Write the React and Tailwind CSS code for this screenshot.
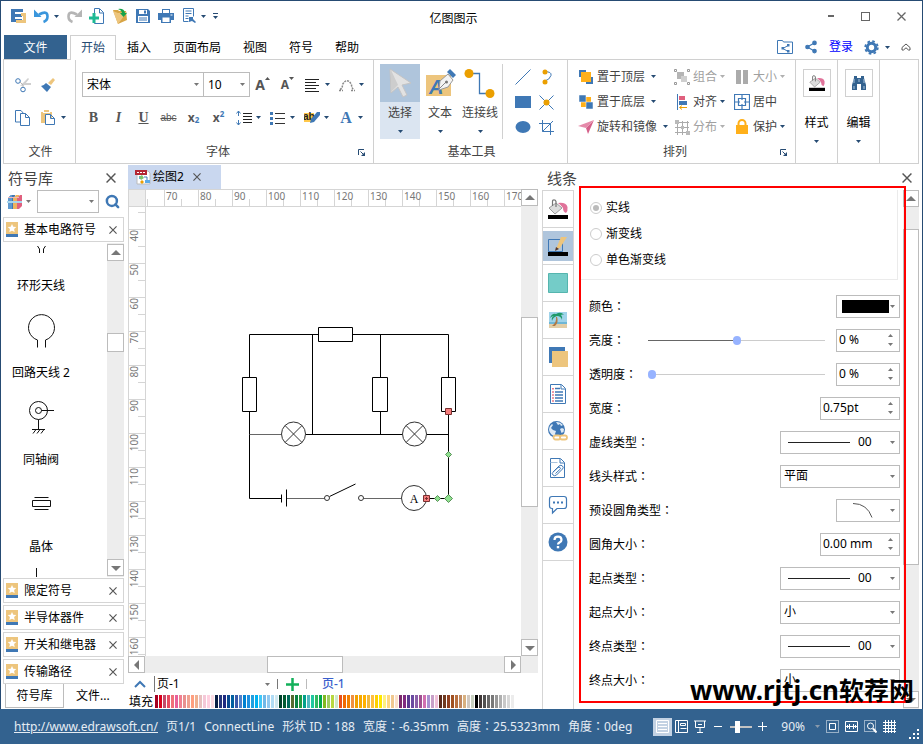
import React from "react";
import { Settings, Share2, Search } from "lucide-react";

const CANVAS_FONT = '"Noto Sans", "Noto Sans CJK SC", sans-serif';

const Svg = ({ w = 16, h = 16, children, className = "" }) => (
  <svg width={w} height={h} viewBox={`0 0 ${w} ${h}`} fill="none" className={`shrink-0 ${className}`} aria-hidden="true">
    {children}
  </svg>
);

const Caret = ({ className = "text-[#264b73]" }) => (
  <Svg w={5} h={3} className={className}>
    <path d="M0 0h5L2.500 3z" fill="currentColor" />
  </Svg>
);

const Cross = ({ size = 9, className = "text-[#555]" }) => (
  <svg width={size} height={size} viewBox="0 0 9 9" className={className} aria-hidden="true">
    <path d="M.5.5l8 8M8.500.5l-8 8" stroke="currentColor" strokeWidth="1.300" />
  </svg>
);

const Arrow = ({ dir }) => {
  const d = {
    up: "M0 7l5-5 5 5z",
    down: "M0 3l5 5 5-5z",
    left: "M7 0L2 5l5 5z",
    right: "M3 0l5 5-5 5z",
  };
  return (
    <Svg w={10} h={10}>
      <path d={d[dir]} fill="#777" />
    </Svg>
  );
};

const ScrollButton = ({ dir }) => (
  <button aria-label={`scroll ${dir}`} className="flex h-[17px] w-[17px] shrink-0 items-center justify-center border border-[#bcbcbc] bg-white">
    <Arrow dir={dir} />
  </button>
);

// the traditional form centres the full-width colon
const Colon = () => (
  <span lang="zh-TW" className="font-['Noto_Sans_CJK_TC']">
    ：
  </span>
);

/* ---------- shared drawings ---------- */

const Bucket = ({ size = 16 }) => (
  <svg width={size} height={size} viewBox="0 0 20 20" aria-hidden="true">
    <path d="M1 9l7-5 6 5-7 6z" fill="#dcdcdc" stroke="#9a9a9a" />
    <path d="M4.500 7V2.500Q4.500.8 6 .8T8 2.500V8" fill="none" stroke="#777" strokeWidth="1.200" />
    <path d="M10 4q8-1 9.500 4 .5 4-1.500 6-3-1-3-5-2-3-5-5z" fill="#e0739a" />
    <path d="M0 16h20v4H0z" fill="#000" />
  </svg>
);

const TwoSquares = ({ top = true }) => (
  <Svg>
    {top ? (
      <>
        <path d="M1 1h7v7H1zM8 8h7v7H8z" fill="#3f78b5" />
        <path d="M3 3h10v10H3z" fill="#ffb01a" />
      </>
    ) : (
      <>
        <path d="M3 3h10v10H3z" fill="#ffb01a" />
        <path d="M1 1h7v7H1zM8 8h7v7H8z" fill="#3f78b5" stroke="#fff" strokeWidth=".5" />
      </>
    )}
  </Svg>
);

const StarBook = () => (
  <Svg w={12} h={15}>
    <path d="M0 0h12v12H0z" fill="#edc57d" />
    <path d="M0 12h12v3H0z" fill="#3f78b5" />
    <path d="M6 2l1.300 2.700 3 .4-2.200 2 .6 3L6 8.700 3.300 10.100l.6-3-2.200-2 3-.4z" fill="#fff" />
  </Svg>
);

/* ---------- title bar ---------- */

const quick = [
  {
    n: "undo",
    caret: true,
    i: (
      <Svg>
        <path d="M5 6.500Q13.500 2 13.500 8.500 13.500 12.500 9.500 14" stroke="#3a96dc" strokeWidth="2.600" />
        <path d="M0 1.500V9h7.500z" fill="#3a96dc" />
      </Svg>
    ),
  },
  {
    n: "redo",
    i: (
      <Svg>
        <path d="M11 6.500Q2.500 2 2.500 8.500 2.500 12.500 6.500 14" stroke="#b5b5b5" strokeWidth="2.600" />
        <path d="M16 1.500V9H8.500z" fill="#b5b5b5" />
      </Svg>
    ),
  },
  {
    n: "new",
    i: (
      <Svg>
        <path d="M5.500 5V.500h5l4 4v11h-9V14M10.500 1v4h4" stroke="#3f78b5" />
        <path d="M3.500 5h3v3.500H10v3H6.500V15h-3v-3.500H0v-3h3.500z" fill="#1fb995" />
      </Svg>
    ),
  },
  {
    n: "open",
    i: (
      <Svg>
        <path d="M1 2h5l1 1h7l1 9-9 4z" fill="#d8a545" />
        <path d="M1 3l5 2 9-1-9 12z" fill="#edc57d" />
        <path d="M6 1q6-1 7 4h2l-3.500 4L8 5h2q-.5-3-4-4z" fill="#16a34a" />
      </Svg>
    ),
  },
  {
    n: "save",
    i: (
      <Svg>
        <path d="M1 1h12l2 2v12H1z" fill="#3f78b5" />
        <path d="M4 2h8v4H4zM3 8h10v6H3z" fill="#fff" />
        <path d="M9 2.500h2v3H9zM4 9.500h8v1H4zM4 11.500h8v1H4z" fill="#3f78b5" />
      </Svg>
    ),
  },
  {
    n: "print",
    i: (
      <Svg>
        <path d="M4 1h8v4H4zM0 5h16v7h-3v3H3v-3H0z" fill="#3f78b5" />
        <path d="M5 2h6v3H5zM4.500 9.500h7V14h-7z" fill="#fff" />
        <path d="M12.500 6.500h2v1h-2z" fill="#fff" />
      </Svg>
    ),
  },
  {
    n: "preview",
    caret: true,
    i: (
      <Svg>
        <path d="M2.500.500h10v8M2.500.500v13h5M4.500 3h6M4.500 5.500h6M4.500 8h3M4.500 10.500h3" stroke="#3f78b5" />
        <path d="M8 9h4v2l3 3-1 1-3-2-3 1z" fill="#3f78b5" />
      </Svg>
    ),
  },
];

const TitleBar = () => (
  <header className="grid h-[34px] grid-cols-[1fr_auto_1fr] items-center pr-4">
    <div className="flex items-center gap-[7px] pb-1 pl-2.5">
      <Svg>
        <path d="M0 1h12v3H4v2h7v3H4v2h7v3H0z" fill="#3f78b5" />
        <path d="M10 5h5v10H5v-3h7V8h-2z" fill="#edc57d" />
      </Svg>
      {quick.map((q) => (
        <button key={q.n} aria-label={q.n} className="flex items-center gap-1">
          {q.i}
          {q.caret && <Caret />}
        </button>
      ))}
      <button aria-label="customize" className="flex flex-col items-center gap-0.5 text-[#264b73]">
        <span className="h-px w-[5px] bg-[#264b73]" />
        <Caret />
      </button>
    </div>
    <h1 className="pt-0.5">亿图图示</h1>
    <div className="flex items-center justify-end gap-[27px] pb-1">
      <button aria-label="minimize" className="h-0.5 w-1.5 bg-[#666]" />
      <button aria-label="maximize" className="h-[9px] w-[9px] border border-[#666]" />
      <button aria-label="close">
        <Cross className="text-[#666]" />
      </button>
    </div>
  </header>
);

const menus = ["插入", "页面布局", "视图", "符号", "帮助"];

const MenuBar = () => (
  <nav className="flex h-6 items-stretch pl-[3px] pr-[11px]">
    <button className="w-[63px] bg-[#33628f] pt-0.5 text-white">文件</button>
    <button className="relative z-10 -mb-px ml-[3px] w-[46px] border border-b-0 border-[#d0d0d0] bg-white text-[#264b73]">开始</button>
    {menus.map((m) => (
      <button key={m} className="px-[11px] pt-0.5">
        {m}
      </button>
    ))}
    <div className="ml-auto flex items-center gap-[11px]">
      <button aria-label="shared folder">
        <Svg>
          <path d="M.5 1.500h5l1 1.500h9v11.500H.5z" stroke="#3f78b5" />
          <path d="M11 6.500L6 9.500l5 3" stroke="#3f78b5" />
          <path d="M10 5h2.500v2.500H10zM4.500 8H7v2.500H4.500zM10 11h2.500v2.500H10z" fill="#3f78b5" />
        </Svg>
      </button>
      <button aria-label="share">
        <Share2 size={14} fill="#3f78b5" className="text-[#3f78b5]" />
      </button>
      <a href="#login" className="text-[#0000ff]">
        登录
      </a>
      <button aria-label="settings" className="flex items-center gap-1.5">
        <Svg w={15} h={15}>
          <circle cx="7.500" cy="7.500" r="4.200" stroke="#3f78b5" strokeWidth="3" />
          <circle cx="7.500" cy="7.500" r="6.300" stroke="#3f78b5" strokeWidth="1.800" strokeDasharray="2.600 2.350" />
        </Svg>
        <Caret />
      </button>
      <button aria-label="collapse">
        <Svg w={10} h={10}>
          <path d="M1 5.500L5 2l4 3.500V8H7.500L5 5.800 2.500 8H1z" stroke="#555" />
        </Svg>
      </button>
    </div>
  </nav>
);

/* ---------- ribbon ---------- */

const Group = ({ label, launcher, className = "", children }) => (
  <section className={`flex shrink-0 flex-col border-r border-[#d0d0d0] ${className}`}>
    <div className="h-[83px]">{children}</div>
    <div className="flex h-[18px] items-center pl-0.5 text-[#444]">
      <span className="flex-1 text-center">{label}</span>
      {launcher && (
        <button aria-label={`${label} options`} className="mr-2">
          <Svg w={7} h={7}>
            <path d="M.5 6V.5H6" stroke="#264b73" />
            <path d="M2.500 2.500l3 3" stroke="#264b73" />
            <path d="M7 3v4H3z" fill="#264b73" />
          </Svg>
        </button>
      )}
    </div>
  </section>
);

const FileGroup = () => (
  <Group label="文件" className="w-[72px]">
    <div className="grid grid-cols-[26px_34px] gap-y-2 pl-[11px] pt-3">
      <button aria-label="cut" className="flex h-[25px] items-center">
        <Svg>
          <path d="M5 9L13 1l1 1-5 6.500zM7 6h9v2H9z" fill="#cfcfcf" />
          <circle cx="3" cy="4" r="2.300" stroke="#3f78b5" />
          <circle cx="8" cy="12.500" r="2.300" stroke="#3f78b5" />
          <path d="M5 5l3 3v2" stroke="#b5b5b5" />
        </Svg>
      </button>
      <button aria-label="format painter" className="flex h-[25px] items-center">
        <Svg>
          <path d="M12 1l2 2-4 5-3-2z" fill="#edc57d" />
          <path d="M5 6l5 4-4 5-6-6q3-.5 5-3z" fill="#3f78b5" />
        </Svg>
      </button>
      <button aria-label="copy" className="flex h-[25px] items-center">
        <Svg>
          <path d="M5 12H.500V.500H6L9 4" stroke="#3f78b5" />
          <path d="M5.500 3.500h5l4 4v8h-9zM10.500 3.500v4h4" fill="#fff" stroke="#3f78b5" />
        </Svg>
      </button>
      <button aria-label="paste" className="flex h-[25px] items-center gap-1">
        <Svg>
          <path d="M0 2h2v1h7V2h2v11H0z" fill="#edc57d" />
          <path d="M3 0h5v2H3z" fill="#edc57d" />
          <path d="M4.500 4.500h5l4 4v6h-9zM9.500 4.500v4h4" fill="#fff" stroke="#3f78b5" />
        </Svg>
        <Caret />
      </button>
    </div>
  </Group>
);

const FontButton = ({ label, children }) => (
  <button aria-label={label} className="flex h-[25px] w-[25px] items-center justify-center text-[#555]">
    {children}
  </button>
);

const FontDrop = ({ label, children }) => (
  <button aria-label={label} className="flex h-[25px] w-[34px] items-center gap-1 pl-[5px]">
    {children}
    <Caret />
  </button>
);

const Combo = ({ label, value, className }) => (
  <div className={`relative ${className}`}>
    <select aria-label={label} className="h-[25px] w-full appearance-none border border-[#bcbcbc] bg-white pl-1 text-black">
      <option>{value}</option>
    </select>
    <Caret className="pointer-events-none absolute right-[5px] top-[11px] text-[#777]" />
  </div>
);

const FontGroup = () => (
  <Group label="字体" launcher className="w-[298px]">
    <div className="flex pl-1.5 pt-3">
      <Combo label="font" value="宋体" className="w-[122px]" />
      <Combo label="font size" value="10" className="-ml-px w-[47px]" />
      <FontButton label="grow font">
        <span className="text-sm font-bold">A</span>
        <Svg w={5} h={16}>
          <path d="M0 3h5L2.500 0z" fill="#555" />
        </Svg>
      </FontButton>
      <FontButton label="shrink font">
        <span className="text-xs font-bold">A</span>
        <Svg w={5} h={16}>
          <path d="M0 0h5L2.500 3z" fill="#555" />
        </Svg>
      </FontButton>
      <FontDrop label="align text">
        <Svg>
          <path d="M0 2.500h14M0 5.500h11M0 8.500h14M0 11.500h11M0 14.500h14" stroke="#222" />
        </Svg>
      </FontDrop>
      <FontDrop label="text on curve">
        <Svg>
          <path d="M1 12.500q2.500-1 2.500-5Q8 0 12.500 7.500q0 4 2.500 5M0 13.500h4M12 13.500h4" stroke="#888" strokeWidth="1.500" strokeDasharray="2 1" />
        </Svg>
      </FontDrop>
    </div>
    <div className="flex pl-[5px] pt-2">
      <FontButton label="bold">
        <b className="font-['Liberation_Serif'] text-sm">B</b>
      </FontButton>
      <FontButton label="italic">
        <b className="font-['Liberation_Serif'] text-sm italic">I</b>
      </FontButton>
      <FontButton label="underline">
        <b className="font-['Liberation_Serif'] text-sm underline">U</b>
      </FontButton>
      <FontButton label="strikethrough">
        <s className="font-['Liberation_Sans'] text-[10px]">abc</s>
      </FontButton>
      <FontButton label="subscript">
        <b className="text-xs">x</b>
        <sub className="text-[8px] font-bold text-[#3f78b5]">2</sub>
      </FontButton>
      <FontButton label="superscript">
        <b className="text-xs">x</b>
        <sup className="text-[8px] font-bold text-[#3f78b5]">2</sup>
      </FontButton>
      <FontDrop label="line spacing">
        <Svg>
          <path d="M2.500 1v5M2.500 10v5M.5 3.500l2-2.500 2 2.500M.5 12.500l2 2.500 2-2.500" stroke="#3f78b5" />
          <path d="M7 3.500h9M7 6.500h9M7 9.500h9M7 12.500h9" stroke="#222" />
        </Svg>
      </FontDrop>
      <FontDrop label="bullets">
        <Svg>
          <path d="M0 2h3v3H0zM0 7h3v3H0zM0 12h3v3H0z" fill="#3f78b5" />
          <path d="M5 3.500h10M5 8.500h10M5 13.500h10" stroke="#333" />
        </Svg>
      </FontDrop>
      <FontDrop label="highlight">
        <Svg>
          <path d="M0 3h10v9H0z" fill="#ffc84a" />
          <text x="-1" y="10" fontSize="10" fontWeight="700" fontFamily="Liberation Sans" fill="#222">ab</text>
          <path d="M13 2h3v3l-6 7-4 1 1-4z" fill="#3f78b5" />
        </Svg>
      </FontDrop>
      <FontDrop label="font color">
        <b className="w-4 text-center font-['Liberation_Serif'] text-base text-[#3f78b5]">A</b>
      </FontDrop>
    </div>
  </Group>
);

const bigTools = [
  {
    t: "选择",
    on: true,
    i: (
      <Svg w={34} h={34}>
        <path d="M7 3l21 14-9 2 5 10-4 2-5-10-7 6z" fill="#e2e2e2" stroke="#c4c4c4" />
        <path d="M8 4v22l7-7z" fill="#cdcdcd" />
      </Svg>
    ),
  },
  {
    t: "文本",
    i: (
      <Svg w={34} h={34}>
        <path d="M3 9h25v21H3z" fill="#edc57d" />
        <text x="6" y="28" fontSize="20" fontWeight="700" fontStyle="italic" fontFamily="Liberation Sans" fill="#3f78b5">A</text>
        <path d="M25 8l5 6-5 7-9 3 1-9z" fill="#f3f3f3" stroke="#999" />
        <path d="M16 23l7-7" stroke="#888" />
        <circle cx="23.500" cy="16" r="1.500" fill="#777" />
        <path d="M24 6l3-3 6 6-3 3z" fill="#3f78b5" />
      </Svg>
    ),
  },
  {
    t: "连接线",
    i: (
      <Svg w={34} h={34}>
        <path d="M6 7.500h10.500v20H26" stroke="#3f78b5" strokeWidth="1.300" />
        <circle cx="6" cy="7.500" r="4.500" fill="#eb9f00" />
        <circle cx="27" cy="27.500" r="4.500" fill="#eb9f00" />
      </Svg>
    ),
  },
];

const shapes = [
  { n: "line", i: <path d="M.5 15.500l15-15" stroke="#3f78b5" /> },
  {
    n: "arc",
    i: (
      <>
        <path d="M5 2.500q8 0 7 4t-7 6" stroke="#3f78b5" />
        <circle cx="6" cy="3" r="2.500" fill="#eb9f00" />
        <circle cx="6" cy="13" r="2.500" fill="#eb9f00" />
      </>
    ),
  },
  { n: "rectangle", i: <path d="M0 2h16v12H0z" fill="#3f78b5" /> },
  {
    n: "connection point",
    i: (
      <>
        <path d="M.5 1.500l14 14M14.500 1.500l-14 14" stroke="#3f78b5" />
        <circle cx="7.500" cy="8.500" r="3" fill="#eb9f00" />
      </>
    ),
  },
  { n: "ellipse", i: <ellipse cx="8" cy="8" rx="7.500" ry="6" fill="#3f78b5" /> },
  { n: "crop", i: <path d="M3.500 1v11.500H15M0 4.500h11.500V16M3.500 12.500L14 2" stroke="#3f78b5" /> },
];

const ToolsGroup = () => (
  <Group label="基本工具" className="w-[194px]">
    <div className="flex pl-1.5 pt-1">
      {bigTools.map((b) => (
        <button key={b.t} className={`flex h-[75px] w-10 flex-col items-center text-[#444] ${b.on ? "bg-[#dbe5f1]" : ""}`}>
          <span className={`flex h-[38px] w-full items-center justify-center ${b.on ? "bg-[#afc5dc]" : ""}`}>{b.i}</span>
          <span className="mt-0.5 leading-[18px]">{b.t}</span>
          <Caret className="mt-2 text-[#264b73]" />
        </button>
      ))}
      <div className="ml-0.5 grid grid-cols-2 gap-x-2 border-l border-[#d0d0d0] pl-3">
        {shapes.map((s) => (
          <button key={s.n} aria-label={s.n} className="flex h-[25px] items-center">
            <Svg>{s.i}</Svg>
          </button>
        ))}
      </div>
    </div>
  </Group>
);

const arrange = [
  { t: "置于顶层", wide: true, i: <TwoSquares /> },
  {
    t: "组合",
    off: true,
    i: (
      <Svg>
        <path d="M3 3h7v7H3z" fill="#b5b5b5" />
        <path d="M7 7h6v6H7z" fill="#cfcfcf" />
        <path d="M.5.500h2v2h-2zM13.500.500h2v2h-2zM.5 13.500h2v2h-2zM13.500 13.500h2v2h-2z" fill="#fff" stroke="#999" />
      </Svg>
    ),
  },
  {
    t: "大小",
    off: true,
    i: (
      <Svg>
        <path d="M2 1h5v14H2zM9 1h5v14H9z" fill="#ababab" />
      </Svg>
    ),
  },
  { t: "置于底层", wide: true, i: <TwoSquares top={false} /> },
  {
    t: "对齐",
    i: (
      <Svg>
        <path d="M3.500 0v16" stroke="#3f78b5" />
        <path d="M5 2h6v4H5z" fill="#e0607e" />
        <path d="M5 7h8v4H5z" fill="#3f78b5" />
        <path d="M13 13.500H6M8 11.500l-2.500 2 2.500 2" stroke="#eb9f00" />
      </Svg>
    ),
  },
  {
    t: "居中",
    plain: true,
    i: (
      <Svg>
        <path d="M.5.500h15v15H.5zM4.500 4.500h7v7h-7zM8 1v6M8 9v6M1 8h6M9 8h6" stroke="#3f78b5" strokeWidth="1.200" />
        <path d="M6 6h4v4H6z" fill="#fff" />
      </Svg>
    ),
  },
  {
    t: "旋转和镜像",
    wide: true,
    i: (
      <Svg>
        <path d="M16 1L10 15 8 9z" fill="#d5608a" />
        <path d="M16 1L0 7l8 2z" fill="#e58aaa" />
      </Svg>
    ),
  },
  {
    t: "分布",
    off: true,
    i: (
      <Svg>
        <path d="M3.500 2v14M8.500 2v14M13.500 2v14M1 3.500h14M1 8.500h14M1 13.500h14" stroke="#ababab" />
        <path d="M1 1h4v4H1zM7 7h3v3H7zM12 12h4v4h-4z" fill="#b9b9b9" />
      </Svg>
    ),
  },
  {
    t: "保护",
    i: (
      <Svg>
        <path d="M2 6h12v9H2z" fill="#ffb01a" />
        <path d="M4.500 7V4.500a3.500 3.500 0 017 0V7" stroke="#ffb01a" strokeWidth="2" />
      </Svg>
    ),
  },
];

const ArrangeGroup = () => (
  <Group label="排列" launcher className="w-[228px]">
    <div className="grid grid-cols-[96px_60px_1fr] pl-[10px] pt-1">
      {arrange.map((a) => (
        <button key={a.t} className={`flex h-[25px] items-center gap-[3px] whitespace-nowrap ${a.off ? "text-[#a0a0a0]" : "text-[#444]"}`}>
          {a.i}
          {a.t}
          {!a.plain && (
            <Caret className={`${a.wide ? "ml-[3px]" : ""} ${a.off ? "text-[#b0b0b0]" : "text-[#264b73]"}`} />
          )}
        </button>
      ))}
    </div>
  </Group>
);

const SideTool = ({ label, children }) => (
  <section className="flex w-[42px] shrink-0 flex-col items-center border-r border-[#d0d0d0] pt-[9px]">
    <button className="flex flex-col items-center">
      <span className="flex h-7 w-7 items-center justify-center border border-[#d0d0d0]">{children}</span>
      <span className="mt-[17px] leading-[18px]">{label}</span>
      <Caret className="mt-2 text-[#264b73]" />
    </button>
  </section>
);

const Ribbon = () => (
  <div className="ml-0.5 mr-[3px] flex h-[105px] overflow-hidden border border-[#d0d0d0] bg-white">
    <FileGroup />
    <FontGroup />
    <ToolsGroup />
    <ArrangeGroup />
    <SideTool label="样式">
      <Bucket />
    </SideTool>
    <SideTool label="编辑">
      <Svg>
        <path d="M3 1h3v2h4V1h3v2l2 7v5h-5V9H6v6H1v-5l2-7z" fill="#33628f" />
        <path d="M3 4v4M13 4v4M3 11v3M13 11v3M8 4v3" stroke="#a9c3dd" />
      </Svg>
    </SideTool>
  </div>
);

/* ---------- symbol library ---------- */

const symbols = [
  {
    t: "环形天线",
    h: 35,
    i: <path d="M34.500 3l2 3v4M42.500 3l-2 3v4" />,
  },
  {
    t: "回路天线 2",
    h: 71,
    i: <path d="M34.500 53.500V46A13 13 0 1142.500 46v7.500" />,
  },
  {
    t: "同轴阀",
    h: 71,
    i: (
      <>
        <circle cx="35.500" cy="29.500" r="9" />
        <circle cx="35.500" cy="29.500" r="3" />
        <path d="M38.500 29.500H51M35.500 38.500v10M29 48.500h13M33 48.500l-3 4M37 48.500l-3 4M41 48.500l-3 4" />
      </>
    ),
  },
  {
    t: "晶体",
    h: 71,
    i: <path d="M31.500 29.500h14M29.500 32.500h18v6h-18zM31.500 41.500h14" />,
  },
];

const LibraryRow = ({ title }) => (
  <div className="flex h-[25px] shrink-0 items-center border border-[#d5d5d5] pl-0.5 pr-1.5">
    <StarBook />
    <span className="ml-1.5 whitespace-nowrap">{title}</span>
    <button aria-label={`close ${title}`} className="ml-auto">
      <Cross size={8} />
    </button>
  </div>
);

const libraries = ["限定符号", "半导体器件", "开关和继电器", "传输路径"];

const Library = () => (
  <aside className="flex w-[127px] shrink-0 flex-col pl-0.5 pr-1">
    <div className="flex h-[26px] shrink-0 items-center justify-between pl-[5px] pr-2 pt-0.5">
      <h2 className="text-[15px] text-[#444]">符号库</h2>
      <button aria-label="close library">
        <Cross size={10} />
      </button>
    </div>
    <div className="flex h-[23px] shrink-0 items-center pl-1">
      <button aria-label="libraries" className="flex items-center gap-1">
        <Svg w={15}>
          <path d="M1 4l3-3h4v14H1z" fill="#3f78b5" />
          <path d="M1 4l3-3h1v14H1z" fill="#5f9ad0" />
          <path d="M6 4l3-3h3v14H6z" fill="#edb45f" />
          <path d="M10 4l3-3h2v11l-3 3h-2z" fill="#e0607e" />
          <path d="M0 7h15v2H0z" fill="#a9d6ee" />
          <path d="M1 3.500h11" stroke="#f0b8b8" />
        </Svg>
        <Caret className="text-[#777]" />
      </button>
      <div className="relative ml-[6px] w-[62px]">
        <select aria-label="search symbols" className="h-[23px] w-full appearance-none border border-[#bcbcbc] bg-white" />
        <Caret className="pointer-events-none absolute right-[5px] top-[10px] text-[#777]" />
      </div>
      <button aria-label="search" className="ml-1.5">
        <Search size={15} strokeWidth={4} className="text-[#3f78b5]" />
      </button>
    </div>
    <div className="mt-1 flex shrink-0 flex-col">
      <LibraryRow title="基本电路符号" />
    </div>
    <div className="mt-px flex min-h-0 flex-1 basis-0 overflow-hidden">
      <div className="w-[76px]">
        {symbols.map((s) => (
          <figure key={s.t} className="flex flex-col items-center">
            <svg width="76" height={s.h} fill="none" stroke="#111">
              {s.i}
            </svg>
            <figcaption className="whitespace-nowrap leading-4">{s.t}</figcaption>
          </figure>
        ))}
        <svg width="76" height="22" stroke="#111">
          <path d="M33.500 13v9" />
        </svg>
      </div>
      <div className="ml-auto flex w-[17px] flex-col bg-[#ededed] pb-px pt-px">
        <ScrollButton dir="up" />
        <div className="flex-[72]" />
        <div className="h-[19px] border border-[#bcbcbc] bg-white" />
        <div className="flex-[206]" />
        <ScrollButton dir="down" />
      </div>
    </div>
    <div className="flex shrink-0 flex-col gap-0.5 pt-px">
      {libraries.map((l) => (
        <LibraryRow key={l} title={l} />
      ))}
    </div>
    <div className="flex h-[25px] shrink-0 pb-px pl-0.5">
      <button className="w-[59px] border border-t-0 border-[#bcbcbc]">符号库</button>
      <button className="ml-3">文件...</button>
    </div>
  </aside>
);

/* ---------- drawing area ---------- */

const hMarks = Array.from({ length: 11 }, (_, i) => 70 + i * 10);
const vMarks = Array.from({ length: 13 }, (_, i) => 40 + i * 10);

const TopRuler = () => (
  <div className="flex min-w-0 flex-1 border-y border-[#d5d5d5]">
    <div className="w-[18px] shrink-0 border-x border-[#d5d5d5] bg-[#ededed]" />
    <svg className="h-full w-full min-w-0 overflow-visible" fontFamily={CANVAS_FONT} fontSize="10" fill="#777" stroke="none">
      <path d="M1.500 9v7" stroke="#d5d5d5" />
      {hMarks.map((m, i) => (
        <g key={m}>
          <path d={`M${18.5 + i * 34} 0v16`} stroke="#d5d5d5" />
          {i < 10 && <path d={`M${35.5 + i * 34} 9v7`} stroke="#d5d5d5" />}
          <text x={20 + i * 34} y="10">{m}</text>
        </g>
      ))}
    </svg>
  </div>
);

const SideRuler = () => (
  <div className="w-[18px] shrink-0 border-x border-[#d5d5d5]">
    <svg className="h-full w-full" fontFamily={CANVAS_FONT} fontSize="10" fill="#777">
      <path d="M9 5.500h8" stroke="#d5d5d5" />
      {vMarks.map((m, i) => (
        <g key={m}>
          <path d={`M0 ${22.5 + i * 34}h17M9 ${39.5 + i * 34}h8`} stroke="#d5d5d5" />
          <text x="9" y={23 + i * 34} textAnchor="end" transform={`rotate(-90 9 ${23 + i * 34})`}>
            {m}
          </text>
        </g>
      ))}
    </svg>
  </div>
);

const Lamp = ({ x, y }) => (
  <g stroke="#333">
    <circle cx={x} cy={y} r="12" fill="#fff" />
    <path d={`M${x - 8.5} ${y - 8.5}l17 17M${x + 8.5} ${y - 8.5}l-17 17`} />
  </g>
);

const Diamond = ({ x, y, r = 3 }) => (
  <path d={`M${x} ${y - r}l${r} ${r}l${-r} ${r}l${-r} ${-r}z`} fill="#8fe08f" stroke="#3f7a3f" strokeWidth=".8" />
);

const Circuit = () => (
  <svg className="min-w-0 flex-1" fill="none" stroke="#000">
    <path d="M103.500 170.500V127.500H172M207 127.500h95.500v43M103.500 205v86.500h32M166.500 127.500v100M234.500 127.500v43M234.500 205v22.500M302.500 205v86.500M160 227.500h97M281 227.500h22M284 291.500h19" />
    <path d="M172.500 120.500h34v14h-34zM96.500 170.500h14v34h-14zM226.500 170.500h15v34h-15zM295.500 170.500h14v34h-14z" fill="#fff" />
    <path d="M103.500 227.500H135M140.500 291.500h38M217.500 291.500H255" stroke="#666" />
    <path d="M135.500 287.500v8M140.500 282.500v17M183.500 289.500l26-12.500" />
    <g stroke="#333">
      <circle cx="181" cy="291" r="2.500" fill="#fff" />
      <circle cx="215" cy="291" r="2.500" fill="#fff" />
      <circle cx="268" cy="291" r="12.500" fill="#fff" />
    </g>
    <Lamp x={147.5} y={227} />
    <Lamp x={268.5} y={227} />
    <text x="268" y="296" textAnchor="middle" fontFamily="Liberation Serif" fontSize="12" fill="#000" stroke="none">A</text>
    <path d="M277.500 288.500h6v6h-6zM299.500 201.500h6v6h-6z" fill="#f57c7c" stroke="#7a3030" />
    <path d="M280.500 290v3M279 291.500h3" stroke="#7a3030" />
    <Diamond x={291.5} y={291.5} />
    <Diamond x={302.5} y={247.5} />
    <Diamond x={302.5} y={291.5} r={4} />
  </svg>
);

const palette = [
  "#a50021", "#d9001b", "#c44a6a", "#e84a5f", "#f0707a", "#e8609a", "#f08090", "#e89090", "#f0a090", "#ff9f80", "#f0b090", "#e8c0c0", "#f5c8d8", "#ffd0e0", "#fbdce4",
  "#0a1f44", "#26357a", "#1f2a80", "#0a4a90", "#0060a0", "#3a5aa8", "#5080c8", "#0080d0", "#2090e0", "#20a0e0", "#00b0f0", "#40c8f8", "#70b8e8", "#90c8f0", "#b0dcf5",
  "#cfe8f0", "#00402a", "#005a30", "#006a5a", "#556b2f", "#0a8040", "#209a40", "#00a08a", "#50b8c0", "#20c8a0", "#30b860", "#00a84a", "#80b820", "#a0cc60", "#b8d840", "#cfe8c8",
  "#e8501a", "#f06a00", "#f08000", "#f09040", "#f0a000", "#f5a800", "#ffb000", "#f0b840", "#ffc040", "#ffd000", "#ffe800", "#fff080", "#ffd880", "#f0c890", "#fbe0c8",
  "#7a2a6a", "#802a80", "#5a3a90", "#6a4aa0", "#8a60a8", "#a05090", "#d070b0", "#a890d0", "#c8a0c8", "#f0c0d8",
  "#5a2a1a", "#703a20", "#904020", "#a05020", "#b87040", "#c08860", "#d8b080", "#d0c8c0", "#c8d0c0",
  "#000000", "#403838", "#505050", "#686868", "#787878", "#989898", "#b0b0b0", "#c8c8c8", "#d8d8d8", "#ececec",
];

const Workspace = () => (
  <main className="flex min-w-0 flex-1 flex-col pr-1">
    <div className="flex h-[25px] shrink-0 pt-px">
      <div className="flex w-[93px] items-center bg-[#c9d7ef] pl-[7px]">
        <Svg>
          <path d="M2 2h11l2 2v11H2z" fill="#fff" stroke="#bbb" />
          <path d="M0 1h12v5H0z" fill="#b32633" />
          <path d="M2 3.500h8" stroke="#fff" strokeDasharray="2 1" />
          <path d="M4 7h3v3H4zM10 11h5v3h-5z" fill="#5aa9e6" />
          <path d="M4 8l3-2 2 3-3 2z" fill="#7cc36a" />
          <path d="M5 13l2-2 2 2-2 2z" fill="#eb9f00" />
          <path d="M9 8h3v3" stroke="#3f78b5" />
        </Svg>
        <span className="ml-0.5">绘图2</span>
        <button aria-label="close document" className="ml-[9px]">
          <Cross size={8} />
        </button>
      </div>
    </div>
    <div className="flex min-h-0 flex-1 basis-0">
      <div className="flex min-w-0 flex-1 flex-col">
        <div className="flex h-[18px] shrink-0">
          <TopRuler />
        </div>
        <div className="flex min-h-0 flex-1">
          <SideRuler />
          <Circuit />
        </div>
      </div>
      <div className="flex w-[17px] shrink-0 flex-col bg-[#ededed]">
        <ScrollButton dir="up" />
        <div className="flex-[112]" />
        <div className="flex-[188] border border-[#bcbcbc] bg-white" />
        <div className="flex-[133]" />
        <ScrollButton dir="down" />
      </div>
    </div>
    <div className="flex h-[17px] shrink-0 bg-[#ededed] pr-[17px]">
      <ScrollButton dir="left" />
      <div className="flex-[123]" />
      <div className="flex-[74] border border-[#bcbcbc] bg-white" />
      <div className="flex-[162]" />
      <ScrollButton dir="right" />
    </div>
    <div className="flex h-[22px] shrink-0 items-center pl-1.5">
      <button aria-label="expand pages">
        <Svg w={12} h={8}>
          <path d="M1 7l5-5 5 5" stroke="#3f78b5" strokeWidth="2" />
        </Svg>
      </button>
      <div className="relative ml-2 w-[120px]">
        <select aria-label="page" className="h-4 w-full appearance-none border-l border-[#777] bg-white pl-0.5 leading-4">
          <option>页-1</option>
        </select>
        <Caret className="pointer-events-none absolute right-1 top-[7px] text-[#777]" />
      </div>
      <span className="ml-[3px] h-[10px] w-px bg-[#777]" />
      <button aria-label="add page" className="ml-2">
        <Svg w={13} h={13}>
          <path d="M6.500 0v13M0 6.500h13" stroke="#12b05a" strokeWidth="2.500" />
        </Svg>
      </button>
      <span className="ml-[7px] h-[10px] w-px bg-[#bbb]" />
      <button className="ml-[15px] font-medium text-[#3a5fcd]">页-1</button>
    </div>
    <div className="flex h-[14px] shrink-0 items-start overflow-hidden">
      <span className="w-[27px] shrink-0 pl-px leading-[14px]">填充</span>
      <div className="flex gap-px">
        {palette.map((c, i) => (
          <button key={i} aria-label={c} className="h-[13px] w-[3px] shrink-0" style={{ backgroundColor: c }} />
        ))}
      </div>
    </div>
  </main>
);

/* ---------- line panel ---------- */

const strip = [
  { n: "fill", i: <Bucket size={20} /> },
  {
    n: "line",
    on: true,
    i: (
      <Svg w={20} h={20}>
        <path d="M.5 3.500h14v12H.5z" stroke="#3f78b5" />
        <path d="M13 1h6l-7 11-4 1z" fill="#edc57d" />
        <path d="M8 11l3 2-4 2z" fill="#5a3a2a" />
        <path d="M0 16h20v4H0z" fill="#000" />
      </Svg>
    ),
  },
  {
    n: "shadow",
    i: (
      <Svg w={20} h={20}>
        <path d="M.5.500h19v19H.5z" fill="#74ccc8" stroke="#55b5ae" />
      </Svg>
    ),
  },
  {
    n: "picture",
    i: (
      <Svg w={20} h={20}>
        <path d="M1 2h18v10H1z" fill="#9fd3ea" />
        <path d="M1 12h18v2H1z" fill="#6fb7d6" />
        <path d="M1 14h18v4H1z" fill="#e2cda6" />
        <path d="M9 7q2 5-2 9h-3q5-4 4-9z" fill="#b07a45" />
        <path d="M2 8q2-5 6-4 5-3 8 1-2-1-3 0 2 2 1 5-1-4-5-4-4 1-5 5-1-4 2-5-2 0-4 2z" fill="#1f9a6a" />
      </Svg>
    ),
  },
  {
    n: "layer",
    i: (
      <Svg w={20} h={20}>
        <path d="M1 0h16v16H1z" fill="#3f78b5" />
        <path d="M4 4h16v16H4z" fill="#edc57d" />
      </Svg>
    ),
  },
  {
    n: "document",
    i: (
      <Svg w={20} h={20}>
        <path d="M2.500.500h11l4 4v15h-15zM13 1v4h4" stroke="#3f78b5" />
        <path d="M7 4.500h5M7 8h8M7 11h8M7 14h8M7 17h8" stroke="#3f78b5" strokeWidth="1.500" />
        <path d="M4 4h2v1.500H4zM4 7.200h2v1.500H4zM4 10.200h2v1.500H4zM4 13.200h2v1.500H4zM4 16.200h2v1.500H4z" fill="#e87a8a" />
      </Svg>
    ),
  },
  {
    n: "hyperlink",
    i: (
      <Svg w={20} h={20}>
        <circle cx="8.500" cy="8.500" r="8.500" fill="#3f78b5" />
        <path d="M1 9q0-4 3-6l1 1-2 3 2 2 3 1-1 3 1 3Q2 14 1 9z" fill="#dfeaf5" />
        <path d="M8 1q4-.5 7 3l-2 1-1-2-2 1zM12 8l2-1 2 1-.5 3-2 1z" fill="#dfeaf5" />
        <rect x="5.500" y="14.500" width="7" height="4" rx="2" fill="#fff" stroke="#edc57d" strokeWidth="1.800" />
        <rect x="12" y="14.500" width="7" height="4" rx="2" fill="#fff" stroke="#edc57d" strokeWidth="1.800" />
      </Svg>
    ),
  },
  {
    n: "attachment",
    i: (
      <Svg w={20} h={20}>
        <path d="M2.500.500h10l4 4v15h-14zM12 1v4h4" stroke="#3f78b5" />
        <path d="M2.500 4.500h7" stroke="#a9c3dd" />
        <path d="M5 14l6-6q2-1.500 3.500 0t0 3l-6 6q-2 1.500-3.500 0t-.3-2.500L10 9.500q1-.8 2 0t0 1.800L7.500 15.500" stroke="#3f78b5" />
      </Svg>
    ),
  },
  {
    n: "comment",
    i: (
      <Svg w={20} h={20}>
        <path d="M4 1.500h12q2.500 0 2.500 2.500v7q0 2.500-2.500 2.500H9L4.500 18v-4.500H4Q1.500 13.500 1.500 11V4Q1.500 1.500 4 1.500z" stroke="#3f78b5" strokeWidth="1.200" />
        <path d="M5 6.500h2v2H5zM9 6.500h2v2H9zM13 6.500h2v2h-2z" fill="#3f78b5" />
      </Svg>
    ),
  },
  {
    n: "help",
    i: (
      <Svg w={20} h={20}>
        <circle cx="10" cy="10" r="9.500" fill="#3f78b5" />
        <path d="M6.500 8q0-3.300 3.500-3.300T13.500 8q0 1.500-2 2.500-1.500.8-1.500 2" stroke="#fff" strokeWidth="2.200" />
        <path d="M8.800 14h2.400v2.300H8.800z" fill="#fff" />
      </Svg>
    ),
  },
];

const Row = ({ id, label, children }) => (
  <div className="flex h-[34px] shrink-0 items-center justify-between">
    <label htmlFor={id} className="whitespace-nowrap">
      {label}
      <Colon />
    </label>
    <div className="flex items-center gap-[11px]">{children}</div>
  </div>
);

const Spin = ({ id, value, className }) => (
  <div className={`flex h-[23px] items-center border border-[#bcbcbc] pl-0.5 pr-1.5 ${className}`}>
    <input id={id} type="text" defaultValue={value} className="w-full min-w-0 bg-transparent outline-none" />
    <span className="flex flex-col gap-1.5">
      <button aria-label="increase">
        <Svg w={5} h={3} className="block">
          <path d="M0 3h5L2.500 0z" fill="#777" />
        </Svg>
      </button>
      <button aria-label="decrease">
        <Caret className="block text-[#777]" />
      </button>
    </span>
  </div>
);

const Slider = ({ label, value, className }) => (
  <input
    type="range"
    aria-label={label}
    defaultValue={value}
    className={`h-[9px] w-[177px] appearance-none bg-[length:100%_1px] bg-center bg-no-repeat [&::-webkit-slider-thumb]:h-[9px] [&::-webkit-slider-thumb]:w-2 [&::-webkit-slider-thumb]:appearance-none [&::-webkit-slider-thumb]:rounded-full [&::-webkit-slider-thumb]:bg-[#97b3ff] ${className}`}
  />
);

const TextSelect = ({ id, value }) => (
  <div className="relative w-[120px]">
    <select id={id} className="h-[23px] w-full appearance-none border border-[#bcbcbc] bg-white pl-[3px]">
      <option>{value}</option>
    </select>
    <Caret className="pointer-events-none absolute right-[5px] top-[10px] text-[#777]" />
  </div>
);

const LineSelect = ({ id }) => (
  <div className="relative w-[120px]">
    <select id={id} className="h-[23px] w-full appearance-none border border-[#bcbcbc] bg-white pl-[77px]">
      <option>00</option>
    </select>
    <span className="pointer-events-none absolute left-2 top-[11px] h-px w-[62px] bg-[#222]" />
    <Caret className="pointer-events-none absolute right-[5px] top-[10px] text-[#777]" />
  </div>
);

const radios = ["实线", "渐变线", "单色渐变线"];

const LinePanel = () => (
  <aside className="relative flex w-[380px] shrink-0 flex-col pr-[3px]">
    <div className="flex h-[26px] shrink-0 items-center justify-between pl-[5px] pr-[7px] pt-0.5">
      <h2 className="text-[15px] text-[#444]">线条</h2>
      <button aria-label="close panel">
        <Cross size={10} />
      </button>
    </div>
    <div className="flex min-h-0 flex-1 basis-0">
      <div className="w-8 shrink-0 border-x border-t border-[#d5d5d5]">
        {strip.map((s) => (
          <button key={s.n} aria-label={s.n} className={`flex h-[37px] w-full items-center justify-center border-b border-[#d5d5d5] ${s.on ? "bg-[#afc5dc] bg-clip-content py-[3px]" : ""}`}>
            {s.i}
          </button>
        ))}
      </div>
      <div className="flex min-w-0 flex-1 flex-col overflow-hidden pl-[7px]">
        <fieldset className="mr-[5px] flex h-[90px] shrink-0 flex-col border-b border-r border-[#ebebeb] pl-[9px] pt-[5px]">
          {radios.map((r, i) => (
            <label key={r} className="flex h-[26px] items-center gap-1">
              <input
                type="radio"
                name="line-kind"
                defaultChecked={i === 0}
                className="h-3 w-3 appearance-none rounded-full border border-[#ccc] bg-white bg-clip-content p-0.5 checked:bg-[#bbb]"
              />
              {r}
            </label>
          ))}
        </fieldset>
        <div className="flex min-h-0 flex-1 flex-col pl-2 pr-[3px] pt-[9px]">
          <Row id="color" label="颜色">
            <button id="color" className="flex h-[23px] w-16 items-center justify-between border border-[#bcbcbc] pl-[5px] pr-1">
              <span className="h-[13px] w-[47px] bg-black" />
              <Caret className="text-[#777]" />
            </button>
          </Row>
          <Row id="bright" label="亮度">
            <Slider label="亮度" value={50} className="bg-[linear-gradient(90deg,#666_50%,#ccc_50%)]" />
            <Spin id="bright" value="0 %" className="w-16" />
          </Row>
          <Row id="alpha" label="透明度">
            <Slider label="透明度" value={0} className="bg-[linear-gradient(90deg,#ccc,#ccc)]" />
            <Spin id="alpha" value="0 %" className="w-16" />
          </Row>
          <Row id="width" label="宽度">
            <Spin id="width" value="0.75pt" className="w-20" />
          </Row>
          <Row id="dash" label="虚线类型">
            <LineSelect id="dash" />
          </Row>
          <Row id="cap" label="线头样式">
            <TextSelect id="cap" value="平面" />
          </Row>
          <Row id="corner" label="预设圆角类型">
            <button id="corner" className="flex h-[23px] w-16 items-center justify-between border border-[#bcbcbc] pl-4 pr-1">
              <Svg w={20} h={15}>
                <path d="M0 .5q14 0 19 14" stroke="#555" />
              </Svg>
              <Caret className="text-[#777]" />
            </button>
          </Row>
          <Row id="radius" label="圆角大小">
            <Spin id="radius" value="0.00 mm" className="w-20" />
          </Row>
          <Row id="begin" label="起点类型">
            <LineSelect id="begin" />
          </Row>
          <Row id="begin-size" label="起点大小">
            <TextSelect id="begin-size" value="小" />
          </Row>
          <Row id="end" label="终点类型">
            <LineSelect id="end" />
          </Row>
          <Row id="end-size" label="终点大小">
            <TextSelect id="end-size" value="小" />
          </Row>
        </div>
      </div>
      <div className="flex w-4 shrink-0 flex-col bg-[#ededed] pb-px">
        <button aria-label="scroll up" className="flex h-[17px] shrink-0 items-center justify-center border border-[#bcbcbc] bg-white">
          <Arrow dir="up" />
        </button>
        <div className="flex-[22]" />
        <div className="flex-[336] border border-[#bcbcbc] bg-white" />
        <div className="flex-[127]" />
        <button aria-label="scroll down" className="flex h-[17px] shrink-0 items-center justify-center border border-[#bcbcbc] bg-white">
          <Arrow dir="down" />
        </button>
      </div>
    </div>
    <div className="pointer-events-none absolute bottom-1.5 left-[37px] right-4 top-[22px] border-2 border-[#ff0000]" />
    <p className="pointer-events-none absolute -bottom-1 right-2 z-10 whitespace-nowrap text-right font-bold leading-[34px] text-black">
      <span className="text-[26px]">www.rjtj.cn</span>
      <span className="text-[25px]">软荐网</span>
    </p>
  </aside>
);

/* ---------- status bar ---------- */

const info = [
  ["形状 ID", "188"],
  ["宽度", "-6.35mm"],
  ["高度", "25.5323mm"],
  ["角度", "0deg"],
];

const StatusBar = () => (
  <footer className="flex h-[35px] shrink-0 items-center gap-2 whitespace-nowrap bg-[#33628f] pl-[14px] pr-1 text-[#e6edf4]">
    <a href="http://www.edrawsoft.cn/" className="underline">
      http://www.edrawsoft.cn/
    </a>
    <span>页1/1</span>
    <span>ConnectLine</span>
    {info.map(([k, v]) => (
      <span key={k}>
        {k}
        <Colon />
        {v}
      </span>
    ))}
    <div className="ml-auto flex items-center gap-1.5">
      <button aria-label="normal view" className="-mr-[3px] flex h-[18px] w-[19px] items-center justify-center bg-[#c3d2e3]">
        <Svg w={13} h={13}>
          <path d="M.5.500h12v12H.5zM2 3.500h9M2 6.500h9M2 9.500h9" stroke="#fff" />
        </Svg>
      </button>
      <button aria-label="page view">
        <Svg w={13} h={13}>
          <path d="M.5.500h12v12H.5zM3.500 1v12M5.500 3.500h5v2h-5zM5.500 8.500h6" stroke="#fff" />
        </Svg>
      </button>
      <button aria-label="presentation">
        <Svg w={12} h={13}>
          <path d="M0 1h12M1.500 1v6.500h9V1M6 8v4M3 12.500h6M4 4.500h4" stroke="#fff" />
        </Svg>
      </button>
      <button aria-label="zoom out" className="mx-0.5 h-px w-2 bg-white" />
      <input
        type="range"
        aria-label="zoom"
        min="0"
        max="100"
        defaultValue="25"
        className="h-3 w-[22px] appearance-none bg-[linear-gradient(90deg,#c3c3c3,#c3c3c3)] bg-[length:100%_2px] bg-center bg-no-repeat [&::-webkit-slider-thumb]:h-3 [&::-webkit-slider-thumb]:w-[5px] [&::-webkit-slider-thumb]:appearance-none [&::-webkit-slider-thumb]:bg-white"
      />
      <button aria-label="zoom in">
        <Svg w={9} h={9}>
          <path d="M4.500 0v9M0 4.500h9" stroke="#fff" />
        </Svg>
      </button>
      <button className="ml-2 flex items-center gap-[10px]">
        90%
        <Caret className="text-[#8a9aab]" />
      </button>
      <button aria-label="fit page">
        <Svg w={13} h={13}>
          <path d="M.5.500h12v12H.5z" stroke="#fff" strokeDasharray="1 1" />
          <path d="M3.500 3.500h6v6h-6z" stroke="#fff" />
        </Svg>
      </button>
      <button aria-label="fit width">
        <Svg w={13} h={13}>
          <path d="M.5 1.500h12v10H.5zM.5 6.500h12M4.500 4v5M8.500 4v5M3 5L1.500 6.500 3 8M10 5l1.500 1.500L10 8" stroke="#fff" />
        </Svg>
      </button>
      <button aria-label="zoom area">
        <Svg w={13} h={13}>
          <path d="M.5.500h11v11H.5z" stroke="#fff" strokeDasharray="1 1" />
          <circle cx="6.500" cy="6" r="3" stroke="#fff" fill="#33628f" />
          <path d="M9 8.500l3.500 4" stroke="#fff" strokeWidth="2" />
        </Svg>
      </button>
      <button aria-label="grid">
        <Svg w={13} h={13}>
          <path d="M2.500 0v13M5.500 0v13M8.500 0v13M11.500 0v13M0 2.500h13M0 5.500h13M0 8.500h13M0 11.500h13" stroke="#fff" />
        </Svg>
      </button>
      <Svg w={11} h={11} className="ml-1.5 mt-4">
        <path d="M9 0h2v2H9zM5 4h2v2H5zM9 4h2v2H9zM1 8h2v2H1zM5 8h2v2H5zM9 8h2v2H9z" fill="#fff" />
      </Svg>
    </div>
  </footer>
);

const App = () => {
  return (
    <div lang="zh-CN" className="flex h-screen min-h-[600px] flex-col overflow-hidden bg-white font-['Noto_Sans','Noto_Sans_CJK_SC',sans-serif] text-xs text-black">
      <div className="flex min-h-0 flex-1 flex-col border border-b-0 border-[#264b73]">
        <TitleBar />
        <MenuBar />
        <Ribbon />
        <div className="flex min-h-0 flex-1">
          <Library />
          <Workspace />
          <LinePanel />
        </div>
      </div>
      <StatusBar />
    </div>
  );
};

export default App;
